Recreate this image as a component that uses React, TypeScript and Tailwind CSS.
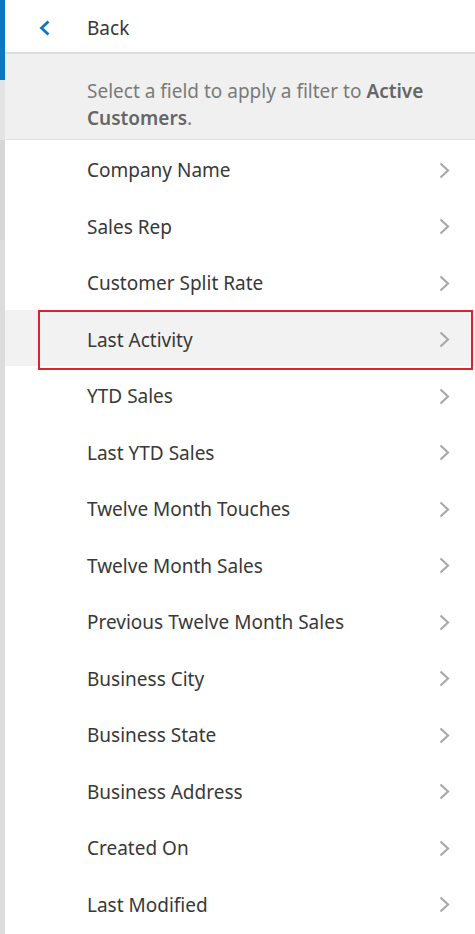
const fields = [
  "Company Name",
  "Sales Rep",
  "Customer Split Rate",
  "Last Activity",
  "YTD Sales",
  "Last YTD Sales",
  "Twelve Month Touches",
  "Twelve Month Sales",
  "Previous Twelve Month Sales",
  "Business City",
  "Business State",
  "Business Address",
  "Created On",
  "Last Modified",
];

function Chevron() {
  return (
    <svg width="11" height="17" viewBox="0 0 11 17" className="shrink-0">
      <polyline points="1.5,1.5 9,8.5 1.5,15.5" fill="none" stroke="#a9a9a9" strokeWidth="2.2" />
    </svg>
  );
}

function FieldRow({ label, active }: { label: string; active?: boolean }) {
  return (
    <div
      className={
        active
          ? "relative h-[56.5px] flex items-center justify-between pt-[4px] pl-[82px] pr-[25px] bg-[#f2f2f2]"
          : "relative h-[56.5px] flex items-center justify-between pt-[4px] pl-[82px] pr-[25px]"
      }
    >
      <span className="text-[19px] text-[#383838]">{label}</span>
      <Chevron />
      {active && (
        <div className="absolute left-[33px] right-[2px] top-0 h-[60px] border-2 border-[#d9232e] pointer-events-none" />
      )}
    </div>
  );
}

export default function App() {
  return (
    <div
      className="w-[475px] h-[934px] flex bg-white overflow-hidden"
      style={{ fontFamily: '"Noto Sans", "Open Sans", sans-serif' }}
    >
      <div className="w-[5px] flex flex-col bg-[#dcdcdc]">
        <div className="h-[80px] bg-[#0a78c2]" />
        <div className="h-[60px] bg-[#e4e4e4]" />
        <div className="h-[100px] bg-[#d6d6d6]" />
      </div>
      <div className="flex-1 flex flex-col">
        <div className="h-[54px] flex items-center pt-[4px] border-b-2 border-[#dedede]">
          <div className="w-[82px] flex pl-[34px]">
            <svg width="12" height="16" viewBox="0 0 12 16">
              <polyline points="9.5,1.5 2.5,8 9.5,14.5" fill="none" stroke="#0a78c2" strokeWidth="2.8" />
            </svg>
          </div>
          <span className="text-[19px] text-[#383838]">Back</span>
        </div>
        <div className="h-[86px] bg-[#f0f0f0] border-b border-[#e2e2e2] pl-[82px] pr-[20px] pt-[24px]">
          <p className="text-[19px] leading-[27px] text-[#7a7a7a]">
            Select a field to apply a filter to <span className="font-semibold text-[#666666]">Active Customers</span>.
          </p>
        </div>
        <div className="flex flex-col">
          {fields.map((f) => (
            <FieldRow key={f} label={f} active={f === "Last Activity"} />
          ))}
        </div>
      </div>
    </div>
  );
}
